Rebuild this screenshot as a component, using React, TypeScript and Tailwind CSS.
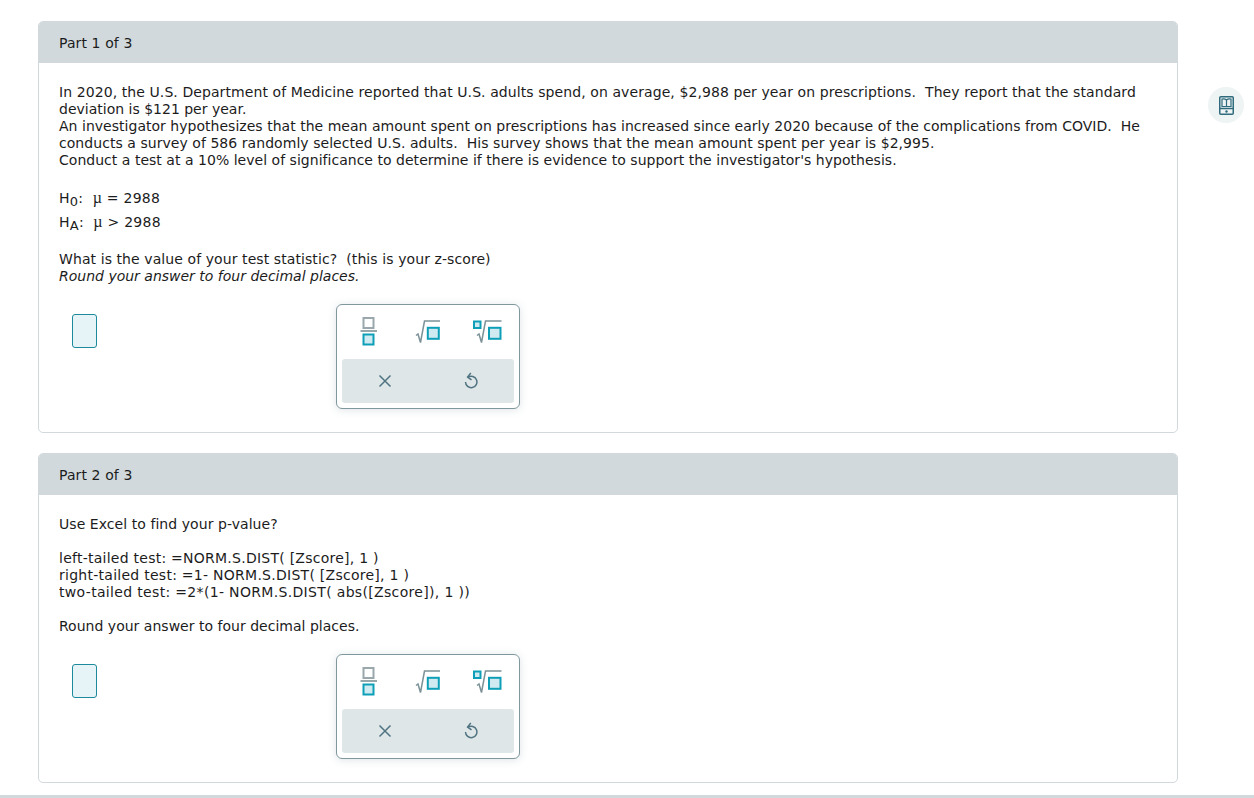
type PartProps = {
  title: string;
  children: React.ReactNode;
  bodyClass: string;
};

function FractionIcon() {
  return (
    <svg width="20" height="30" viewBox="0 0 20 30">
      <rect x="4.500" y="1" width="10" height="10" fill="#fff" stroke="#9aa7ac" strokeWidth="2" />
      <line x1="1.500" y1="14" x2="18" y2="14" stroke="#7c9298" strokeWidth="1.600" />
      <rect x="4.500" y="17.500" width="10" height="10" fill="#cfeaf0" stroke="#0e9fb8" strokeWidth="2" />
    </svg>
  );
}

function SqrtIcon() {
  return (
    <svg width="26" height="24" viewBox="0 0 26 24">
      <path d="M1 15.500 L3 14 L5.500 22.500 L9.500 1 H25" fill="none" stroke="#7c9298" strokeWidth="1.500" />
      <rect x="12.800" y="7.800" width="11" height="11" fill="#cfeaf0" stroke="#0e9fb8" strokeWidth="2" />
    </svg>
  );
}

function NthRootIcon() {
  return (
    <svg width="30" height="24" viewBox="0 0 30 24">
      <rect x="1" y="1.500" width="6.500" height="6.500" fill="#cfeaf0" stroke="#0e9fb8" strokeWidth="2" />
      <path d="M4 15.500 L6 14 L8.500 22.500 L12.500 1 H28.500" fill="none" stroke="#7c9298" strokeWidth="1.500" />
      <rect x="16" y="7.800" width="11.500" height="11" fill="#cfeaf0" stroke="#0e9fb8" strokeWidth="2" />
    </svg>
  );
}

function ClearIcon() {
  return (
    <svg width="14" height="14" viewBox="0 0 14 14">
      <path d="M1.500 1.500 L12.500 12.500 M12.500 1.500 L1.500 12.500" stroke="#4f7380" strokeWidth="1.500" fill="none" />
    </svg>
  );
}

function UndoIcon() {
  return (
    <svg width="14" height="18" viewBox="0 0 14 18">
      <path d="M4 5.200 A5.700 5.700 0 1 1 1.500 10" fill="none" stroke="#4f7380" strokeWidth="1.500" />
      <path d="M6.800 1 L3.600 5 L7.500 7.800" fill="none" stroke="#4f7380" strokeWidth="1.500" />
    </svg>
  );
}

function BookIcon() {
  return (
    <svg width="15" height="19" viewBox="0 0 15 19">
      <rect x="0.750" y="0.750" width="13.500" height="17.500" rx="1" fill="none" stroke="#2f6b7c" strokeWidth="1.500" />
      <line x1="1" y1="12.500" x2="14" y2="12.500" stroke="#2f6b7c" strokeWidth="1.500" />
      <path d="M7.500 4 C6.500 3 4.500 2.800 3 3 V10.500 H7.500 H12 V3 C10.500 2.800 8.500 3 7.500 4 V10.500" fill="none" stroke="#2f6b7c" strokeWidth="1.200" />
      <circle cx="7.500" cy="15.500" r="1.200" fill="#2f6b7c" />
    </svg>
  );
}

function AnswerTools() {
  return (
    <div className="flex items-start">
      <div className="mt-[10px] ml-[33px] w-[25px] h-[34px] rounded-[3px] border-[1.5px] border-[#1c8a9c] bg-[#e6f4f8]" />
      <div className="ml-[239px] w-[184px] h-[105px] rounded-[6px] border border-[#7f989e] bg-white p-[5px] shadow-[0_1px_8px_rgba(90,120,130,0.2)]">
        <div className="h-[49px] flex items-center pb-[6px]">
          <div className="w-[54px] flex justify-center"><FractionIcon /></div>
          <div className="w-[60px] flex justify-center pl-[4px]"><SqrtIcon /></div>
          <div className="w-[58px] flex justify-center pl-[6px]"><NthRootIcon /></div>
        </div>
        <div className="h-[44px] rounded-[3px] bg-[#dfe6e8] flex items-center">
          <div className="w-[86px] flex justify-center"><ClearIcon /></div>
          <div className="w-[86px] flex justify-center"><UndoIcon /></div>
        </div>
      </div>
    </div>
  );
}

function Part({ title, children, bodyClass }: PartProps) {
  return (
    <section className="w-[1140px] rounded-[5px] border border-[#d2d9dc] bg-white overflow-hidden">
      <div className="h-[42px] -mx-px -mt-px bg-[#d1d9dc] pl-[21px] pt-[2px] tracking-[0.1px] flex items-center">{title}</div>
      <div className={bodyClass}>{children}</div>
    </section>
  );
}

function Mu() {
  return <span className="font-['Liberation_Serif',serif] text-[16px] leading-none">µ</span>;
}

export default function App() {
  return (
    <div className="relative h-[798px] w-full overflow-hidden bg-white text-[14px] leading-[17px] text-[#1c1c1c] font-['DejaVu_Sans','Liberation_Sans',sans-serif]">
      <div className="flex items-start pt-[21px] pl-[38px]">
        <div className="flex flex-col gap-[20px]">
          <Part title="Part 1 of 3" bodyClass="pt-[21px] h-[369px]">
            <div className="pl-[20px] whitespace-nowrap">
              <p className="tracking-[0.085px]">
                In 2020, the U.S. Department of Medicine reported that U.S. adults spend, on average, $2,988 per year on prescriptions.&nbsp; They report that the standard
              </p>
              <p>deviation is $121 per year.</p>
              <p className="tracking-[0.025px]">
                An investigator hypothesizes that the mean amount spent on prescriptions has increased since early 2020 because of the complications from COVID.&nbsp; He
              </p>
              <p className="tracking-[0.05px]">
                conducts a survey of 586 randomly selected U.S. adults.&nbsp; His survey shows that the mean amount spent per year is $2,995.
              </p>
              <p className="tracking-[0.025px]">Conduct a test at a 10% level of significance to determine if there is evidence to support the investigator's hypothesis.</p>
              <p className="mt-[17px] h-[24px] leading-[24px] tracking-[0.25px]">
                H<sub className="text-[13px] leading-none">0</sub>:&nbsp; <Mu /> = 2988
              </p>
              <p className="h-[24px] leading-[24px] tracking-[0.25px]">
                H<sub className="text-[13px] leading-none">A</sub>:&nbsp; <Mu /> &gt; 2988
              </p>
              <p className="mt-[17px] tracking-[0.085px]">What is the value of your test statistic?&nbsp; (this is your z-score)</p>
              <p className="italic">Round your answer to four decimal places.</p>
            </div>
            <div className="mt-[19px]">
              <AnswerTools />
            </div>
          </Part>
          <Part title="Part 2 of 3" bodyClass="pt-[21px] h-[287px]">
            <div className="pl-[20px] whitespace-nowrap">
              <p className="tracking-[0.06px]">Use Excel to find your p-value?</p>
              <p className="mt-[17px] tracking-[0.25px]">left-tailed test: =NORM.S.DIST( [Zscore], 1 )</p>
              <p className="tracking-[0.265px]">right-tailed test: =1- NORM.S.DIST( [Zscore], 1 )</p>
              <p className="tracking-[0.33px]">two-tailed test: =2*(1- NORM.S.DIST( abs([Zscore]), 1 ))</p>
              <p className="mt-[17px] tracking-[0.015px]">Round your answer to four decimal places.</p>
            </div>
            <div className="mt-[19px]">
              <AnswerTools />
            </div>
          </Part>
        </div>
        <div className="ml-[30px] mt-[66px] w-[36px] h-[36px] rounded-full bg-[#eef3f4] flex items-center justify-center">
          <BookIcon />
        </div>
      </div>
      <div className="absolute bottom-0 left-0 right-0 h-[3px] bg-[#d1d9dc]" />
    </div>
  );
}
